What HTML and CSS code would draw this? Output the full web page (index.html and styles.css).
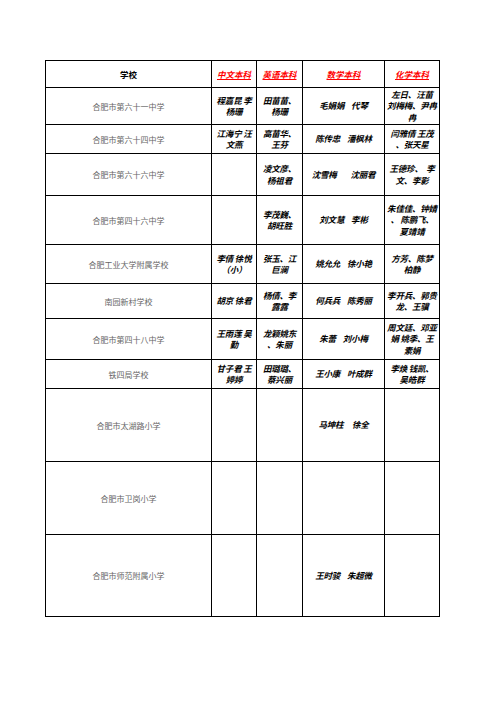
FILE: index.html
```html
<!DOCTYPE html>
<html lang="zh">
<head>
<meta charset="utf-8">
<title>学校</title>
<link rel="stylesheet" href="styles.css">
</head>
<body>
<div class="page">
<table class="sheet">
  <colgroup>
    <col class="c-school"><col class="c-zh"><col class="c-en"><col class="c-math"><col class="c-chem">
  </colgroup>
  <thead>
    <tr class="h-head">
      <th class="th-school">学校</th>
      <th class="th-sub">中文本科</th>
      <th class="th-sub">英语本科</th>
      <th class="th-sub">数学本科</th>
      <th class="th-sub">化学本科</th>
    </tr>
  </thead>
  <tbody>
    <tr class="h1">
      <td class="school">合肥市第六十一中学</td>
      <td class="nm">程嘉昆 李<br>杨珊</td>
      <td class="nm">田苗苗、<br>杨珊</td>
      <td class="nm">毛娟娟&nbsp;&nbsp;&nbsp;&nbsp;代琴</td>
      <td class="nm">左日、汪苗<br>刘梅梅、尹冉<br>冉</td>
    </tr>
    <tr class="h2">
      <td class="school">合肥市第六十四中学</td>
      <td class="nm">江海宁 汪<br>文燕</td>
      <td class="nm">高苗华、<br>王芬</td>
      <td class="nm">陈传忠&nbsp;&nbsp;&nbsp;&nbsp;潘枫林</td>
      <td class="nm">闫雅倩 王茂<br>、张天星</td>
    </tr>
    <tr class="h3">
      <td class="school">合肥市第六十六中学</td>
      <td class="nm"></td>
      <td class="nm">凌文彦、<br>杨祖君</td>
      <td class="nm">沈雪梅&nbsp;&nbsp;&nbsp;&nbsp;&nbsp;&nbsp;&nbsp;&nbsp;沈丽君</td>
      <td class="nm">王德珍、&nbsp;&nbsp;李<br>文、李影</td>
    </tr>
    <tr class="h4">
      <td class="school">合肥市第四十六中学</td>
      <td class="nm"></td>
      <td class="nm">李茂巍、<br>胡旺胜</td>
      <td class="nm">刘文慧&nbsp;&nbsp;&nbsp;&nbsp;李彬</td>
      <td class="nm">朱佳佳、钟婧<br>、 陈鹏飞、<br>夏靖靖</td>
    </tr>
    <tr class="h5">
      <td class="school">合肥工业大学附属学校</td>
      <td class="nm">李倩 徐悦<br>（小）</td>
      <td class="nm">张玉、江<br>巨澜</td>
      <td class="nm">姚允允&nbsp;&nbsp;&nbsp;&nbsp;徐小艳</td>
      <td class="nm">方芳、陈梦<br>柏静</td>
    </tr>
    <tr class="h6">
      <td class="school">南园新村学校</td>
      <td class="nm">胡京 徐君</td>
      <td class="nm">杨倩、李<br>露露</td>
      <td class="nm">何兵兵&nbsp;&nbsp;&nbsp;&nbsp;陈秀丽</td>
      <td class="nm">李开兵、郭贵<br>龙、王骥</td>
    </tr>
    <tr class="h7">
      <td class="school">合肥市第四十八中学</td>
      <td class="nm">王雨莲 吴<br>勤</td>
      <td class="nm">龙颖姚东<br>、朱丽</td>
      <td class="nm">朱蕾&nbsp;&nbsp;&nbsp;&nbsp;刘小梅</td>
      <td class="nm">周文廷、邓亚<br>娟 姚季、王<br>素娟</td>
    </tr>
    <tr class="h8">
      <td class="school">铁四局学校</td>
      <td class="nm">甘子君 王<br>婷婷</td>
      <td class="nm">田璐璐、<br>蔡兴丽</td>
      <td class="nm">王小康&nbsp;&nbsp;&nbsp;&nbsp;叶成群</td>
      <td class="nm">李焕 钱凯、<br>吴皓群</td>
    </tr>
    <tr class="h9">
      <td class="school">合肥市太湖路小学</td>
      <td class="nm"></td>
      <td class="nm"></td>
      <td class="nm">马坤柱&nbsp;&nbsp;&nbsp;&nbsp;&nbsp;徐全</td>
      <td class="nm"></td>
    </tr>
    <tr class="h10">
      <td class="school">合肥市卫岗小学</td>
      <td class="nm"></td>
      <td class="nm"></td>
      <td class="nm"></td>
      <td class="nm"></td>
    </tr>
    <tr class="h11">
      <td class="school">合肥市师范附属小学</td>
      <td class="nm"></td>
      <td class="nm"></td>
      <td class="nm">王时骏&nbsp;&nbsp;&nbsp;&nbsp;朱超微</td>
      <td class="nm"></td>
    </tr>
  </tbody>
</table>
</div>
</body>
</html>
```

FILE: styles.css
```css
html, body {
  margin: 0;
  padding: 0;
  background: #fff;
}

.page {
  padding: 60px 0 0 45px;
}

.sheet {
  border-collapse: collapse;
  table-layout: fixed;
  width: 394px;
  font-family: "Noto Sans CJK SC", "Noto Sans", sans-serif;
}

.c-school { width: 166px; }
.c-zh { width: 45px; }
.c-en { width: 46px; }
.c-math { width: 82px; }
.c-chem { width: 55px; }

.sheet th,
.sheet td {
  border: 1px solid #000;
  padding: 0 1px;
  text-align: center;
  vertical-align: middle;
  overflow: hidden;
  white-space: nowrap;
}

.th-school {
  font-size: 8.5px;
  font-weight: 700;
  color: #000;
}

.th-sub {
  font-size: 8.5px;
  font-weight: 700;
  font-style: italic;
  color: #ff0000;
  text-decoration: underline;
}

.school {
  font-size: 8px;
  font-weight: 400;
  color: #666;
  line-height: 11px;
}

.nm {
  font-size: 8.5px;
  font-weight: 700;
  font-style: italic;
  color: #000;
  line-height: 11.5px;
  letter-spacing: -0.2px;
}

.h-head { height: 27px; }
.h1 { height: 37px; }
.h2 { height: 29px; }
.h3 { height: 42px; }
.h4 { height: 49px; }
.h5 { height: 39px; }
.h6 { height: 35px; }
.h7 { height: 41px; }
.h8 { height: 29px; }
.h9 { height: 73px; }
.h10 { height: 73px; }
.h11 { height: 82px; }
```
